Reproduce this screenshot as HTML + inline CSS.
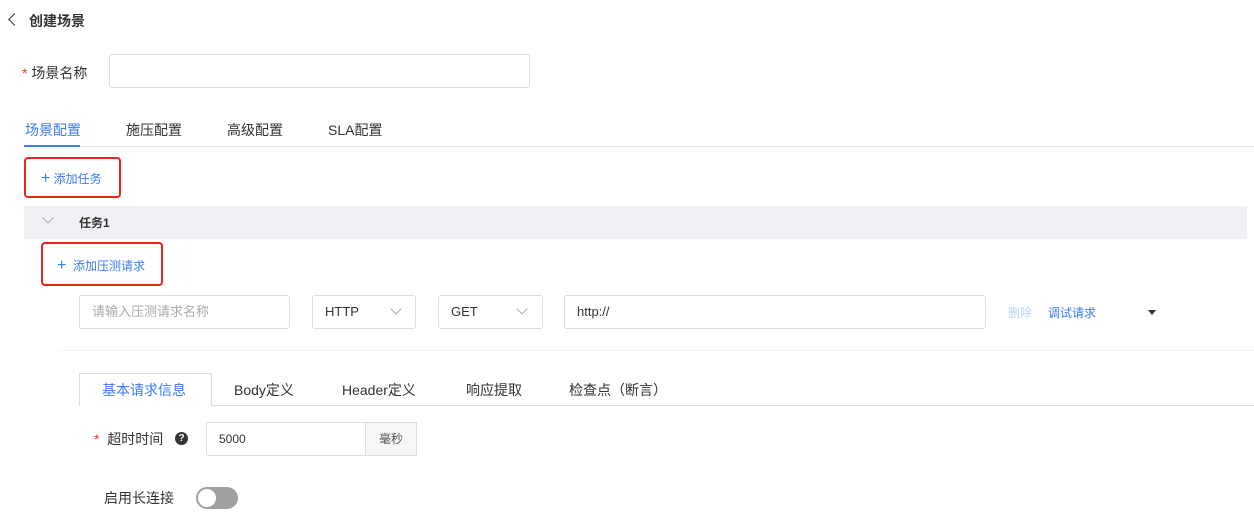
<!DOCTYPE html>
<html><head><meta charset="utf-8"><style>
*{box-sizing:border-box;margin:0;padding:0}
body{width:1254px;height:524px;background:#fff;font-family:"Liberation Sans","Noto Sans CJK SC",sans-serif;color:#333;position:relative;overflow:hidden;font-size:14px}
.a{position:absolute}
.inp{position:absolute;border:1px solid #dcdcdc;border-radius:3px;background:#fff;height:34px;font-size:13px;line-height:32px;padding-left:12px}
.red{position:absolute;border:2px solid #e8251b;border-radius:4px}
.blue{color:#3b7cf0}
.chev{position:absolute;width:8px;height:8px;border-right:1px solid #aaa;border-bottom:1px solid #aaa;transform:rotate(45deg)}
</style></head><body>
<div class="a" style="left:10px;top:15px;width:9px;height:9px;border-left:1.5px solid #333;border-bottom:1.5px solid #333;transform:rotate(45deg)"></div>
<div class="a" style="left:29px;top:11px;font-size:14px;font-weight:bold;color:#333">创建场景</div>
<div class="a" style="left:22px;top:63px;font-size:14px"><span style="color:#e33">*</span> 场景名称</div>
<div class="inp" style="left:109px;top:54px;width:421px;height:34px"></div>
<div class="a" style="left:25px;top:120px;font-size:14px;color:#3b7cf0">场景配置</div>
<div class="a" style="left:126px;top:120px;font-size:14px">施压配置</div>
<div class="a" style="left:227px;top:120px;font-size:14px">高级配置</div>
<div class="a" style="left:328px;top:120px;font-size:14px">SLA配置</div>
<div class="a" style="left:25px;top:146px;width:1229px;height:1px;background:#e3e3ea"></div>
<div class="a" style="left:24px;top:145px;width:56px;height:2px;background:#3b7cf0"></div>
<div class="red" style="left:24px;top:157px;width:97px;height:41px"></div>
<div class="a blue" style="left:41px;top:170px;font-size:12px"><span style="font-size:16px;line-height:12px">+</span> 添加任务</div>
<div class="a" style="left:24px;top:206px;width:1223px;height:33px;background:#f0f1f4"></div>
<div class="chev" style="left:44px;top:214px"></div>
<div class="a" style="left:79px;top:214px;font-size:12px;font-weight:bold">任务1</div>
<div class="red" style="left:41px;top:242px;width:122px;height:44px"></div>
<div class="a blue" style="left:57px;top:257px;font-size:12px"><span style="font-size:16px;line-height:12px">+</span>&nbsp; 添加压测请求</div>
<div class="inp" style="left:79px;top:295px;width:211px;color:#aaa">请输入压测请求名称</div>
<div class="inp" style="left:312px;top:295px;width:104px">HTTP</div><div class="chev" style="left:392px;top:305px"></div>
<div class="inp" style="left:438px;top:295px;width:105px">GET</div><div class="chev" style="left:518px;top:305px"></div>
<div class="inp" style="left:564px;top:295px;width:422px">http://</div>
<div class="a" style="left:1008px;top:304px;font-size:12px;color:#bcd3fa">删除</div>
<div class="a blue" style="left:1048px;top:304px;font-size:12px">调试请求</div>
<div class="a" style="left:1148px;top:310px;border-left:4px solid transparent;border-right:4px solid transparent;border-top:5px solid #333"></div>
<div class="a" style="left:59px;top:350px;width:1195px;height:1px;background:#f2f2f2"></div>
<div class="a" style="left:79px;top:405px;width:1175px;height:1px;background:#ddd"></div>
<div class="a" style="left:79px;top:373px;width:133px;height:33px;border:1px solid #ddd;border-bottom:none;background:#fff"></div>
<div class="a blue" style="left:102px;top:380px;font-size:14px">基本请求信息</div>
<div class="a" style="left:234px;top:380px;font-size:14px">Body定义</div>
<div class="a" style="left:342px;top:380px;font-size:14px">Header定义</div>
<div class="a" style="left:466px;top:380px;font-size:14px">响应提取</div>
<div class="a" style="left:569px;top:380px;font-size:14px">检查点（断言）</div>
<div class="a" style="left:94px;top:429px;font-size:14px"><span style="color:#e33">*</span>&nbsp; 超时时间</div>
<div class="a" style="left:175px;top:432px;width:13px;height:13px;border-radius:50%;background:#333;color:#fff;font-size:10px;line-height:13px;text-align:center;font-weight:bold">?</div>
<div class="inp" style="left:206px;top:422px;width:211px;height:34px;font-size:12px">5000</div>
<div class="a" style="left:365px;top:422px;width:52px;height:34px;border:1px solid #dcdcdc;background:#f5f6f8;font-size:12px;line-height:32px;text-align:center;color:#555">毫秒</div>
<div class="a" style="left:104px;top:488px;font-size:14px">启用长连接</div>
<div class="a" style="left:196px;top:487px;width:42px;height:22px;border-radius:11px;background:#a0a0a0"></div>
<div class="a" style="left:198px;top:489px;width:18px;height:18px;border-radius:50%;background:#fff"></div>
</body></html>
